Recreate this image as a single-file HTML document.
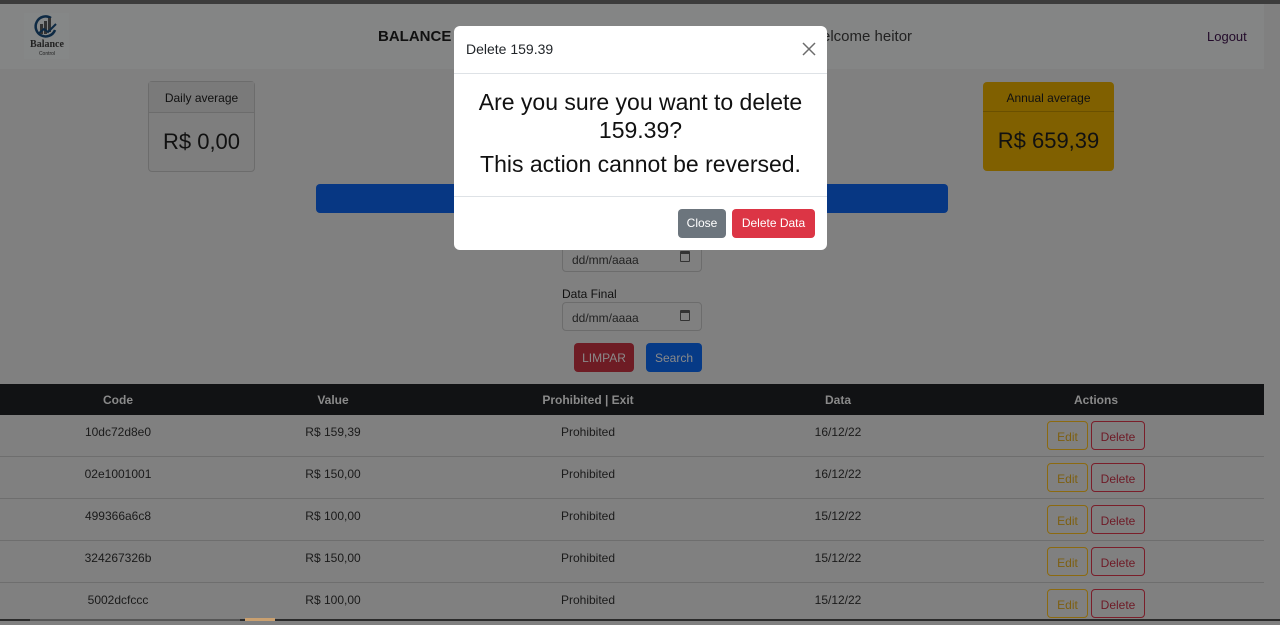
<!DOCTYPE html>
<html><head><meta charset="utf-8"><style>
*{box-sizing:border-box;margin:0;padding:0}
body{width:1280px;height:621px;overflow:hidden;background:#808080;font-family:"Liberation Sans",sans-serif;position:relative;color:#111}
.a{position:absolute}
.c{text-align:center}
</style></head><body>
<div class="a" style="left:0;top:0;width:1280px;height:4px;background:#3c3c3c"></div>
<div class="a" style="left:0;top:4px;width:1264px;height:65px;background:#848585"></div>
<div class="a" style="left:24px;top:13px;width:45px;height:46px;background:#858787"></div>
<svg class="a" style="left:31px;top:14px" width="30" height="26" viewBox="0 0 30 26">
<path d="M20 4 A10 10 0 1 0 24 16" fill="none" stroke="#0e2a44" stroke-width="2.5"/>
<rect x="9" y="10" width="3" height="10" fill="#333"/><rect x="13" y="7" width="3" height="13" fill="#333"/><rect x="17" y="4" width="3" height="14" fill="#333"/>
<path d="M7 20 L13 15 L17 18 L25 10" fill="none" stroke="#0e2a44" stroke-width="2"/>
</svg>
<div class="a" style="left:26px;top:39px;width:42px;font:bold 10px 'Liberation Serif',serif;text-align:center;color:#222">Balance</div>
<div class="a" style="left:26px;top:51px;width:42px;font-size:5px;text-align:center;color:#222">Control</div>
<div class="a" style="left:378px;top:28px;font-size:15px;font-weight:bold;color:#111">BALANCE C</div>
<div class="a" style="left:822px;top:28px;font-size:15px;color:#222">elcome heitor</div>
<div class="a" style="left:1207px;top:29px;font-size:13px;color:#220a2a">Logout</div>

<div class="a" style="left:148px;top:81px;width:107px;height:91px;border:1px solid #6c6c6c;border-radius:4px;background:#7e7e7e">
<div class="c" style="height:31px;line-height:33px;font-size:12px;border-bottom:1px solid #6c6c6c;background:#7a7a7a">Daily average</div>
<div class="c" style="line-height:58px;font-size:22px">R$ 0,00</div></div>
<div class="a" style="left:983px;top:82px;width:131px;height:89px;border-radius:4px;background:#806000">
<div class="c" style="height:30px;line-height:32px;font-size:12px;border-bottom:1px solid #6a5000">Annual average</div>
<div class="c" style="line-height:58px;font-size:22px">R$ 659,39</div></div>
<div class="a" style="left:316px;top:184px;width:632px;height:29px;background:#073783;border-radius:4px"></div>

<div class="a" style="left:562px;top:245px;width:140px;height:27px;border:1px solid #6c6c6c;border-radius:4px;font-size:12px;padding:7px 9px;color:#222">dd/mm/aaaa<span style="position:absolute;right:11px;top:5px;width:10px;height:11px;border:1.5px solid #333;border-top-width:3px;border-radius:1px"></span></div>
<div class="a" style="left:562px;top:287px;font-size:12px">Data Final</div>
<div class="a" style="left:562px;top:302px;width:140px;height:29px;border:1px solid #6c6c6c;border-radius:4px;font-size:12px;padding:8px 9px;color:#222">dd/mm/aaaa<span style="position:absolute;right:11px;top:7px;width:10px;height:11px;border:1.5px solid #333;border-top-width:3px;border-radius:1px"></span></div>
<div class="a c" style="left:574px;top:343px;width:60px;height:29px;line-height:31px;background:#6e1c24;border-radius:4px;font-size:12px;color:#8a8a8a">LIMPAR</div>
<div class="a c" style="left:646px;top:343px;width:56px;height:29px;line-height:31px;background:#063a86;border-radius:4px;font-size:12px;color:#8a8a8a">Search</div>

<div class="a" style="left:0;top:384px;width:1264px;height:31px;background:#111214"></div>
<div class="a" style="left:0;top:393px;width:1264px;font-size:12px;font-weight:bold;color:#8a8a8a">
<span class="a c" style="left:58px;width:120px">Code</span><span class="a c" style="left:273px;width:120px">Value</span><span class="a c" style="left:518px;width:140px">Prohibited | Exit</span><span class="a c" style="left:778px;width:120px">Data</span><span class="a c" style="left:1036px;width:120px">Actions</span></div>

<div class="a" style="left:0;top:415px;width:1264px;font-size:12px;color:#1a1a1a">
<div style="position:relative;height:42px;border-bottom:1px solid #6e6e6e"><span class="a c" style="left:58px;width:120px;top:10px">10dc72d8e0</span><span class="a c" style="left:273px;width:120px;top:10px">R$ 159,39</span><span class="a c" style="left:528px;width:120px;top:10px">Prohibited</span><span class="a c" style="left:778px;width:120px;top:10px">16/12/22</span><span class="a c" style="left:1047px;top:6px;width:41px;height:29px;line-height:30px;border:1px solid #8c6a10;border-radius:4px;color:#7d5f10">Edit</span><span class="a c" style="left:1091px;top:6px;width:54px;height:29px;line-height:30px;border:1px solid #7a1e2a;border-radius:4px;color:#6e1a26">Delete</span></div>
<div style="position:relative;height:42px;border-bottom:1px solid #6e6e6e"><span class="a c" style="left:58px;width:120px;top:10px">02e1001001</span><span class="a c" style="left:273px;width:120px;top:10px">R$ 150,00</span><span class="a c" style="left:528px;width:120px;top:10px">Prohibited</span><span class="a c" style="left:778px;width:120px;top:10px">16/12/22</span><span class="a c" style="left:1047px;top:6px;width:41px;height:29px;line-height:30px;border:1px solid #8c6a10;border-radius:4px;color:#7d5f10">Edit</span><span class="a c" style="left:1091px;top:6px;width:54px;height:29px;line-height:30px;border:1px solid #7a1e2a;border-radius:4px;color:#6e1a26">Delete</span></div>
<div style="position:relative;height:42px;border-bottom:1px solid #6e6e6e"><span class="a c" style="left:58px;width:120px;top:10px">499366a6c8</span><span class="a c" style="left:273px;width:120px;top:10px">R$ 100,00</span><span class="a c" style="left:528px;width:120px;top:10px">Prohibited</span><span class="a c" style="left:778px;width:120px;top:10px">15/12/22</span><span class="a c" style="left:1047px;top:6px;width:41px;height:29px;line-height:30px;border:1px solid #8c6a10;border-radius:4px;color:#7d5f10">Edit</span><span class="a c" style="left:1091px;top:6px;width:54px;height:29px;line-height:30px;border:1px solid #7a1e2a;border-radius:4px;color:#6e1a26">Delete</span></div>
<div style="position:relative;height:42px;border-bottom:1px solid #6e6e6e"><span class="a c" style="left:58px;width:120px;top:10px">324267326b</span><span class="a c" style="left:273px;width:120px;top:10px">R$ 150,00</span><span class="a c" style="left:528px;width:120px;top:10px">Prohibited</span><span class="a c" style="left:778px;width:120px;top:10px">15/12/22</span><span class="a c" style="left:1047px;top:6px;width:41px;height:29px;line-height:30px;border:1px solid #8c6a10;border-radius:4px;color:#7d5f10">Edit</span><span class="a c" style="left:1091px;top:6px;width:54px;height:29px;line-height:30px;border:1px solid #7a1e2a;border-radius:4px;color:#6e1a26">Delete</span></div>
<div style="position:relative;height:42px"><span class="a c" style="left:58px;width:120px;top:10px">5002dcfccc</span><span class="a c" style="left:273px;width:120px;top:10px">R$ 100,00</span><span class="a c" style="left:528px;width:120px;top:10px">Prohibited</span><span class="a c" style="left:778px;width:120px;top:10px">15/12/22</span><span class="a c" style="left:1047px;top:6px;width:41px;height:29px;line-height:30px;border:1px solid #8c6a10;border-radius:4px;color:#7d5f10">Edit</span><span class="a c" style="left:1091px;top:6px;width:54px;height:29px;line-height:30px;border:1px solid #7a1e2a;border-radius:4px;color:#6e1a26">Delete</span></div>
</div>
<div class="a" style="left:0;top:619px;width:1280px;height:2px;background:#2a2a2a"></div>
<div class="a" style="left:30px;top:619px;width:210px;height:2px;background:#555"></div>
<div class="a" style="left:245px;top:618px;width:30px;height:3px;background:#c9a070"></div>

<div class="a" style="left:454px;top:26px;width:373px;height:224px;background:#fff;border-radius:6px">
<div style="height:48px;border-bottom:1px solid #dee2e6;padding:15px 12px;font-size:14px;color:#212529">Delete 159.39</div>
<svg class="a" style="left:348px;top:16px" width="14" height="14" viewBox="0 0 14 14"><path d="M1 1L13 13M13 1L1 13" stroke="#6c6c6c" stroke-width="1.5"/></svg>
<div class="c" style="height:123px;border-bottom:1px solid #dee2e6;padding-top:14px;font-size:23px;line-height:28px;color:#111">Are you sure you want to delete<br>159.39?<div style="margin-top:6px">This action cannot be reversed.</div></div>
<div class="a c" style="left:224px;top:183px;width:48px;height:29px;line-height:29px;background:#6c757d;color:#fff;border-radius:4px;font-size:12px">Close</div>
<div class="a c" style="left:278px;top:183px;width:83px;height:29px;line-height:29px;background:#dc3545;color:#fff;border-radius:4px;font-size:12px">Delete Data</div>
</div>
</body></html>
